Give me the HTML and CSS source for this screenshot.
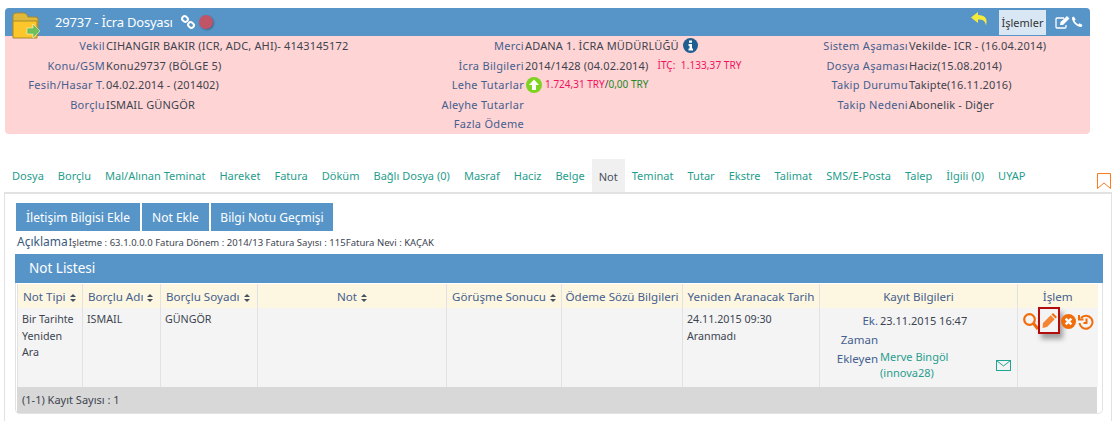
FILE: index.html
```html
<!DOCTYPE html>
<html lang="tr">
<head>
<meta charset="utf-8">
<title>29737 - İcra Dosyası</title>
<link rel="stylesheet" href="styles.css">
</head>
<body>
<section class="file">
  <header class="file-bar">
    <svg class="folder" width="30" height="30" viewBox="0 0 30 30"><path d="M1 5q0-3 3-3h8q2 0 3 2l1 2h7q3 0 3 2v16H1z" fill="#e0b93a" stroke="#a8892d"/><path d="M1 10h24v17H1z" fill="#fdc72b" stroke="#a8892d"/><path d="M15 17h6v-4l7 7-7 7v-4h-6z" fill="#6fbf5a" stroke="#fff" stroke-width=".5"/></svg>
    <h1 class="file-title">29737 - İcra Dosyası</h1>
    <svg class="ic-link" width="14" height="14" viewBox="0 0 14 14" fill="none" stroke="#fff" stroke-width="2"><rect x="1" y="1.5" width="6" height="5" rx="2.5" transform="rotate(40 4 4)"/><rect x="7" y="7.5" width="6" height="5" rx="2.5" transform="rotate(40 10 10)"/></svg>
    <span class="dot"></span>
    <span class="bar-space"></span>
    <svg class="ic-reply" width="18" height="15" viewBox="0 0 18 15"><path d="M7 0 0 5.500 7 11V7.500c5 0 7 1 8 6 2-7-1-10.500-8-10.500z" fill="#f5e93b"/></svg>
    <span class="ops">İşlemler</span>
    <svg class="ic-edit" width="15" height="13" viewBox="0 0 15 13" fill="none" stroke="#fff" stroke-width="1.300"><path d="M11 9v2q0 1-1 1H2q-1 0-1-1V3q0-1 1-1h7"/><path d="M5 9l.500-3L12 0l2.500 2.500L8 9z" fill="#fff" stroke="none"/></svg>
    <svg class="ic-phone" width="12" height="12" viewBox="0 0 12 12"><path d="M2.800.500 1 1.500C.5 5.500 6 11.500 10.500 11l1-2-3-1.700-1.300 1.200C6 8 4 6 3.500 4.800l1.200-1.300z" fill="#fff"/></svg>
  </header>
  <div class="file-info">
    <span class="lbl">Vekil</span><span class="val">CIHANGIR BAKIR (ICR, ADC, AHI)- 4143145172</span>
    <span class="lbl">Merci</span><span class="val">ADANA 1. İCRA MÜDÜRLÜĞÜ <svg class="ic-info" width="15" height="15" viewBox="0 0 15 15"><circle cx="7.500" cy="7.500" r="7.500" fill="#1f5f8f"/><path d="M6 2.500h3v2.200H6zM5.500 6H9v4.500h1V12.500H5.500v-2h1V8h-1z" fill="#fff"/></svg></span>
    <span class="lbl">Sistem Aşaması</span><span class="val">Vekilde- ICR - (16.04.2014)</span>

    <span class="lbl">Konu/GSM</span><span class="val">Konu29737 (BÖLGE 5)</span>
    <span class="lbl">İcra Bilgileri</span><span class="val">2014/1428 (04.02.2014) <small class="red itc">İTÇ:&nbsp; 1.133,37 TRY</small></span>
    <span class="lbl">Dosya Aşaması</span><span class="val">Haciz(15.08.2014)</span>

    <span class="lbl">Fesih/Hasar T.</span><span class="val">04.02.2014 - (201402)</span>
    <span class="lbl">Lehe Tutarlar</span><span class="val money"><svg class="ic-up" width="16" height="16" viewBox="0 0 16 16"><circle cx="8" cy="8" r="8" fill="#7ed321"/><path d="M8 2.500 13 8h-3v5H6V8H3z" fill="#fff"/></svg><small class="red">1.724,31 TRY</small><small>/</small><small class="green">0,00 TRY</small></span>
    <span class="lbl">Takip Durumu</span><span class="val">Takipte(16.11.2016)</span>

    <span class="lbl">Borçlu</span><span class="val">ISMAIL GÜNGÖR</span>
    <span class="lbl">Aleyhe Tutarlar</span><span class="val"></span>
    <span class="lbl">Takip Nedeni</span><span class="val">Abonelik - Diğer</span>

    <span class="lbl"></span><span class="val"></span>
    <span class="lbl">Fazla Ödeme</span><span class="val"></span>
    <span class="lbl"></span><span class="val"></span>
  </div>
</section>

<nav class="tabs">
  <a>Dosya</a><a>Borçlu</a><a>Mal/Alınan Teminat</a><a>Hareket</a><a>Fatura</a><a>Döküm</a><a>Bağlı Dosya (0)</a><a>Masraf</a><a>Haciz</a><a>Belge</a><a class="active">Not</a><a>Teminat</a><a>Tutar</a><a>Ekstre</a><a>Talimat</a><a>SMS/E-Posta</a><a>Talep</a><a>İlgili (0)</a><a>UYAP</a>
  <svg class="bookmark" width="14" height="16" viewBox="0 0 14 16" fill="none" stroke="#ff7a1a" stroke-width="1"><path d="M.500.500h13v15L7 10l-6.500 5.500z"/></svg>
</nav>

<main class="content">
  <div class="buttons">
    <button class="btn btn-a">İletişim Bilgisi Ekle</button>
    <button class="btn btn-b">Not Ekle</button>
    <button class="btn btn-c">Bilgi Notu Geçmişi</button>
  </div>
  <p class="desc"><span class="desc-l">Açıklama</span><span class="desc-v">İşletme : 63.1.0.0.0 Fatura Dönem : 2014/13 Fatura Sayısı : 115Fatura Nevi : KAÇAK</span></p>
  <section class="panel">
    <h2 class="panel-head">Not Listesi</h2>
    <table class="notes">
      <colgroup><col class="c1"><col class="c2"><col class="c3"><col class="c4"><col class="c5"><col class="c6"><col class="c7"><col class="c8"><col class="c9"></colgroup>
      <thead>
        <tr>
          <th>Not Tipi <i class="sort"></i></th>
          <th>Borçlu Adı <i class="sort"></i></th>
          <th>Borçlu Soyadı <i class="sort"></i></th>
          <th class="ctr">Not <i class="sort"></i></th>
          <th class="ctr">Görüşme Sonucu <i class="sort"></i></th>
          <th class="ctr">Ödeme Sözü Bilgileri</th>
          <th class="ctr">Yeniden Aranacak Tarih</th>
          <th class="ctr">Kayıt Bilgileri</th>
          <th class="ctr">İşlem</th>
        </tr>
      </thead>
      <tbody>
        <tr>
          <td>Bir Tarihte Yeniden Ara</td>
          <td>ISMAIL</td>
          <td>GÜNGÖR</td>
          <td></td>
          <td></td>
          <td></td>
          <td>24.11.2015 09:30<br>Aranmadı</td>
          <td class="rec-cell">
            <div class="rec">
              <span class="rec-l">Ek. Zaman</span><span class="rec-v">23.11.2015 16:47</span>
              <span class="rec-l">Ekleyen</span><span class="rec-v rec-user"><span>Merve Bingöl (innova28)</span><svg class="ic-mail" width="15" height="11" viewBox="0 0 15 11" fill="none" stroke="#1fa593"><rect x=".5" y=".5" width="14" height="10"/><path d="M.5.500 7.500 6l7-5.500"/></svg></span>
            </div>
          </td>
          <td class="act-cell">
            <div class="acts">
              <svg class="a-search" width="16" height="17" viewBox="0 0 16 17" fill="none" stroke="#f36c0a" stroke-width="2.200"><circle cx="6.500" cy="6.500" r="5.300"/><path d="M10.500 10.500l4.500 5.500" stroke-width="3"/></svg>
              <span class="pen"><svg width="15" height="15" viewBox="0 0 15 15"><path d="M11 0l4 4-1.500 1.500-4-4z" fill="#f36c0a"/><path d="M8.700 2.300l4 4L5 14 .5 15 1 10z" fill="#f58536"/></svg></span>
              <svg class="a-x" width="15" height="15" viewBox="0 0 16 16"><circle cx="8" cy="8" r="8" fill="#f36c0a"/><path d="M5 5l6 6M11 5l-6 6" stroke="#fff" stroke-width="2.600"/></svg>
              <svg class="a-hist" width="16" height="16" viewBox="0 0 16 16" fill="none" stroke="#f36c0a" stroke-width="2"><path d="M3 4a6.500 6.500 0 1 1-1.500 5"/><path d="M1 1v4.500h4.500"/><path d="M8.500 4.500V9H5.500"/></svg>
            </div>
          </td>
        </tr>
      </tbody>
    </table>
    <div class="panel-foot">(1-1) Kayıt Sayısı : 1</div>
  </section>
</main>
</body>
</html>
```
FILE: styles.css
```css
* { box-sizing: border-box; }
html, body { margin: 0; padding: 0; }
body {
  font-family: "Noto Sans", "Open Sans", sans-serif;
  font-size: 11px;
  color: #3d4450;
  background: #fff;
  height: 421px;
  overflow: hidden;
}
svg { display: block; }

.file {
  margin: 8px 28px 0 5px;
  border-radius: 4px;
  overflow: hidden;
  background: #ffd4d4;
  height: 126px;
}
.file-bar {
  height: 28px;
  background: #5795c9;
  display: flex;
  align-items: center;
  position: relative;
  padding-left: 50px;
  color: #fff;
}
.folder { position: absolute; left: 7px; top: 3px; }
.file-title { margin: 0; font-size: 13px; font-weight: 400; letter-spacing: -.2px; }
.ic-link { margin-left: 8px; }
.dot { width: 14px; height: 14px; border-radius: 50%; background: #c25468; margin-left: 4px; box-shadow: 1px 1px 2px rgba(0,0,0,.3); }
.bar-space { flex: 1; }
.ic-reply { margin-right: 10px; margin-top: -5px; }
.ops { background: #d9e7f4; color: #333; height: 25px; line-height: 25px; width: 47px; text-align: center; margin-right: 9px; font-size: 11px; white-space: nowrap; }
.ic-edit { margin-right: 1px; }
.ic-phone { margin-right: 7px; }

.file-info {
  display: grid;
  grid-template-columns: 100px 320px 99px 285px 99px 1fr;
  grid-auto-rows: 19.5px;
  line-height: 19px;
}
.lbl { text-align: right; color: #44608f; white-space: nowrap; letter-spacing: .3px; }
.val { padding-left: 1px; display: flex; align-items: center; color: #3d4450; white-space: pre; letter-spacing: .15px; }
.ic-info { margin-left: 1px; }
.red { color: #f0125f; }
.green { color: #1d8a2a; }
small { font-size: 10px; letter-spacing: 0; }
.itc { margin-left: 6px; letter-spacing: .08px; }
.money .ic-up { margin: 0 3px 0 1px; }
.money small { white-space: pre; }

.tabs {
  display: flex;
  height: 33px;
  margin: 25px 0 0 5px;
  align-items: stretch;
  position: relative;
}
.tabs a {
  padding: 9px 7px 0;
  color: #1f9d8d;
  white-space: nowrap;
  letter-spacing: .02px;
}
.tabs a.active { background: #f0f0f0; color: #4a5160; padding-top: 10px; }
.bookmark { position: absolute; left: 1092px; top: 14px; }

.content {
  margin-left: 4px;
  margin-right: 6px;
  height: 230px;
  border: 2px solid #e2e2e2;
  border-bottom: 0;
  border-right-width: 1px;
  border-left-width: 1px;
  padding: 9px 8px 0 10px;
  position: relative;
}
.buttons { display: flex; gap: 2px; padding-left: 1px; }
.btn {
  height: 28px;
  border: 0;
  background: #5795c9;
  color: #fff;
  font: inherit;
  font-size: 12px;
  padding: 0;
}
.btn-a { width: 124px; }
.btn-b { width: 67px; }
.btn-c { width: 122px; }
.desc { margin: 2px 0 0; height: 21px; line-height: 18px; padding-left: 2px; white-space: nowrap; }
.desc-l { font-size: 12px; color: #3a5a80; margin-right: 1px; }
.desc-v { font-size: 9.500px; letter-spacing: .02px; }

.panel { border: 1px solid #e2e2e2; border-top: 0; border-radius: 0 0 5px 5px; height: 160px; }
.panel-head {
  margin: 0 -1px 1px;
  height: 29px;
  line-height: 28px;
  background: #5795c9;
  color: #fff;
  font-size: 13.500px;
  font-weight: 400;
  padding-left: 14px;
}
.notes {
  border-collapse: collapse;
  table-layout: fixed;
  width: 1080px;
  margin-left: 1px;
}
.c1 { width: 65px; } .c2 { width: 78px; } .c3 { width: 97px; } .c4 { width: 189px; }
.c5 { width: 115px; } .c6 { width: 121px; } .c7 { width: 137px; } .c8 { width: 198px; } .c9 { width: 80px; }
.notes th {
  height: 24px;
  background: #fdf6e0;
  border-left: 1px solid #e2e2e2;
  font-weight: 400;
  font-size: 11.600px;
  color: #44608f;
  text-align: left;
  padding: 0 0 0 5px;
  white-space: nowrap;
}
.notes th.ctr { text-align: center; padding: 0; }
.notes td {
  height: 79px;
  background: #f4f4f4;
  border-left: 1px solid #e2e2e2;
  vertical-align: top;
  padding: 3px 4px 0;
  line-height: 16.500px;
  font-size: 10.700px;
}
.sort {
  display: inline-block;
  position: relative;
  width: 6px;
  height: 8px;
  margin-left: 1px;
  vertical-align: -1px;
}
.sort::before, .sort::after {
  content: "";
  position: absolute;
  left: 0;
  border-left: 3px solid transparent;
  border-right: 3px solid transparent;
}
.sort::before { top: 0; border-bottom: 3px solid #44505f; }
.sort::after { bottom: 0; border-top: 3px solid #44505f; }

.notes .rec-cell { padding: 3px 6px 0 0; }
.rec {
  display: grid;
  grid-template-columns: 58px 1fr;
  column-gap: 2px;
}
.rec-l { text-align: right; color: #44608f; font-size: 11.500px; line-height: 19px; padding-left: 14px; }
.rec-v { line-height: 19px; font-size: 11px; }
.rec-user { display: flex; align-items: center; color: #2a9d8f; line-height: 16px; justify-content: space-between; }
.rec-user span { width: 80px; }

.notes .act-cell { padding: 0; }
.acts { display: flex; align-items: flex-start; padding-left: 5px; margin-top: -1px; }
.acts > svg { flex: none; }
.a-search { margin-top: 6px; }
.a-x { margin: 7px 0 0 1px; }
.a-hist { margin: 7px 0 0 2px; }
.pen {
  width: 22px;
  height: 27px;
  margin-left: -1px;
  border: 2px solid #b30c0c;
  box-shadow: 3px 5px 5px rgba(0,0,0,.35);
  display: flex;
  justify-content: center;
  padding-top: 4px;
  flex: none;
}
.panel-foot {
  margin-left: 1px;
  width: 1080px;
  height: 26px;
  line-height: 25px;
  background: #d8d8d8;
  padding-left: 5px;
}
```
